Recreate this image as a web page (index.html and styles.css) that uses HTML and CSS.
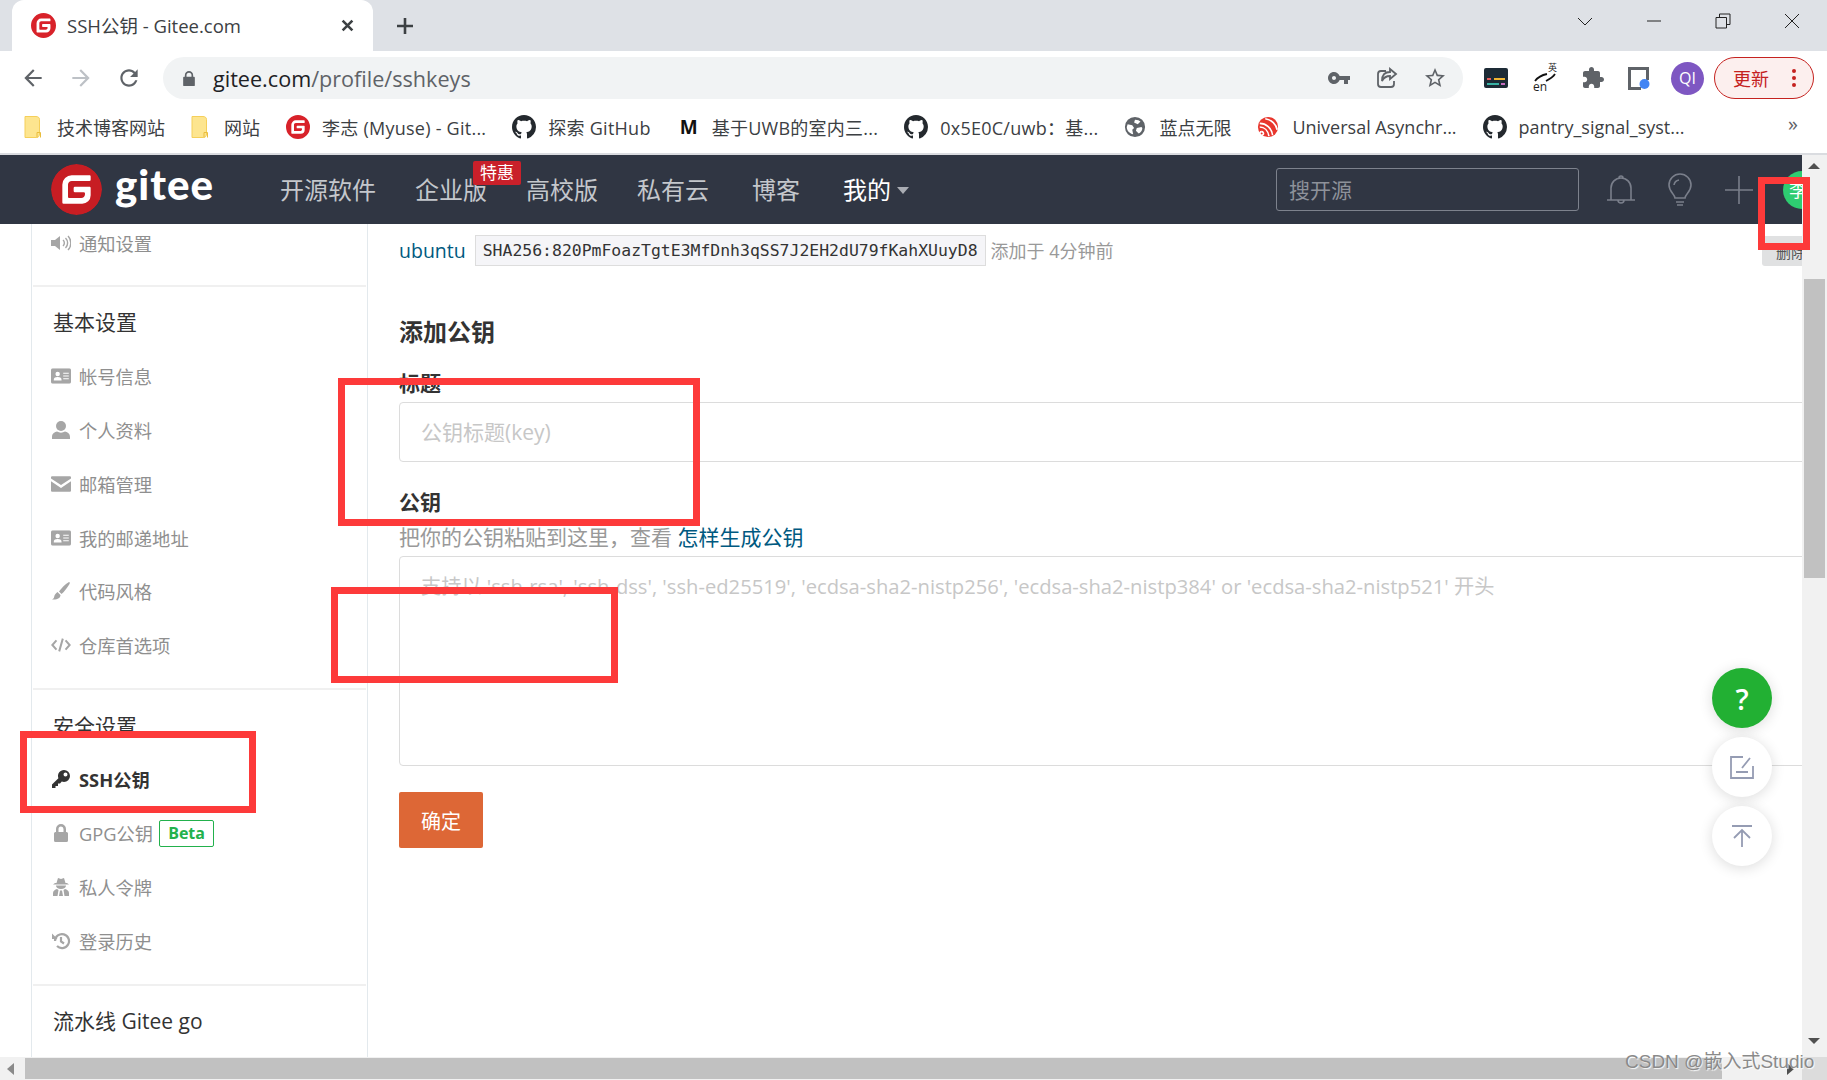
FILE: index.html
```html
<!DOCTYPE html>
<html lang="en">
<head>
  <meta charset="UTF-8">
  <title>SSH公钥 - Gitee.com</title>
  <link rel="stylesheet" href="styles.css">
</head>
<body>
  <svg class="sprites" width="0" height="0">
    <symbol id="i-gitee" viewBox="0 0 24 24"><path fill="currentColor" d="M11.984 0A12 12 0 0 0 0 12a12 12 0 0 0 12 12 12 12 0 0 0 12-12A12 12 0 0 0 12 0a12 12 0 0 0-.016 0zm6.09 5.333c.328 0 .593.266.592.593v1.482a.594.594 0 0 1-.593.592H9.777c-.982 0-1.778.796-1.778 1.778v5.63c0 .327.266.592.593.592h5.63c.982 0 1.778-.796 1.778-1.778v-.296a.593.593 0 0 0-.592-.593h-4.15a.592.592 0 0 1-.592-.592v-1.482a.593.593 0 0 1 .593-.592h6.815c.327 0 .593.265.593.592v3.408a4 4 0 0 1-4 4H5.926a.593.593 0 0 1-.593-.593V9.778a4.444 4.444 0 0 1 4.445-4.444h8.296Z"/></symbol>
    <symbol id="i-github" viewBox="0 0 16 16"><path fill="currentColor" d="M8 0C3.58 0 0 3.58 0 8c0 3.54 2.29 6.53 5.47 7.59.4.07.55-.17.55-.38 0-.19-.01-.82-.01-1.49-2.01.37-2.53-.49-2.69-.94-.09-.23-.48-.94-.82-1.13-.28-.15-.68-.52-.01-.53.63-.01 1.08.58 1.23.82.72 1.21 1.87.87 2.33.66.07-.52.28-.87.51-1.07-1.78-.2-3.64-.89-3.64-3.95 0-.87.31-1.59.82-2.15-.08-.2-.36-1.02.08-2.12 0 0 .67-.21 2.2.82.64-.18 1.32-.27 2-.27.68 0 1.36.09 2 .27 1.53-1.04 2.2-.82 2.2-.82.44 1.1.16 1.92.08 2.12.51.56.82 1.27.82 2.15 0 3.07-1.87 3.75-3.65 3.95.29.25.54.73.54 1.48 0 1.07-.01 1.93-.01 2.2 0 .21.15.46.55.38A8.013 8.013 0 0016 8c0-4.42-3.58-8-8-8z"/></symbol>
    <symbol id="i-folder" viewBox="0 0 18 24"><path fill="#fde58f" stroke="#f5cf5a" d="M1 1.5h11c2 0 3.5 1 3.5 3v14.5c0 2-1 3.500-3 3.500H1z"/><path fill="none" stroke="#e9bd3c" d="M13 22.500v-5h3.500v5"/></symbol>
    <symbol id="i-card" viewBox="0 0 18 14"><path fill="currentColor" fill-rule="evenodd" d="M1.500 0h15A1.500 1.500 0 0 1 18 1.500v11a1.500 1.500 0 0 1-1.500 1.500h-15A1.500 1.500 0 0 1 0 12.500v-11A1.500 1.500 0 0 1 1.500 0zM6 3.200a2 2 0 1 0 0 4 2 2 0 0 0 0-4zM2.500 11h7c.2-2-1-3-3.500-3s-3.700 1-3.500 3zM11 4v1h5V4zm0 2.500v1h5v-1zM11 9v1h5V9z"/></symbol>
  </svg>

  <div class="tab-strip">
    <div class="tab">
      <svg class="tab-icon"><use href="#i-gitee"/></svg>
      <span class="tab-title">SSH公钥 - Gitee.com</span>
      <svg class="tab-close" viewBox="0 0 12 12"><path d="M1.500 1.500l9 9m0-9l-9 9"/></svg>
    </div>
    <svg class="tab-new" viewBox="0 0 18 18"><path d="M9 1v16M1 9h16"/></svg>
    <div class="window-btns">
      <svg viewBox="0 0 16 16"><path d="M1 5l7 7 7-7"/></svg>
      <svg viewBox="0 0 16 16"><path d="M1 8h14"/></svg>
      <svg viewBox="0 0 16 16"><path d="M1 4.500h10.500V15H1zM4.500 4.500V1H15v10.500h-3.500"/></svg>
      <svg viewBox="0 0 16 16"><path d="M1 1l14 14M15 1L1 15"/></svg>
    </div>
  </div>

  <div class="toolbar">
    <svg class="tb-btn" viewBox="0 0 24 24"><path d="M20 11H7.830l5.590-5.590L12 4l-8 8 8 8 1.410-1.410L7.830 13H20v-2z"/></svg>
    <svg class="tb-btn tb-off" viewBox="0 0 24 24"><path d="M4 11h12.170l-5.590-5.590L12 4l8 8-8 8-1.410-1.410L16.170 13H4v-2z"/></svg>
    <svg class="tb-btn" viewBox="0 0 24 24"><path d="M17.650 6.350C16.200 4.900 14.210 4 12 4c-4.420 0-7.990 3.580-7.990 8s3.570 8 7.990 8c3.730 0 6.840-2.550 7.730-6h-2.080c-.82 2.330-3.040 4-5.650 4-3.310 0-6-2.690-6-6s2.690-6 6-6c1.660 0 3.140.69 4.220 1.780L13 11h7V4l-2.350 2.350z"/></svg>
    <div class="omnibox">
      <svg class="omni-lock" viewBox="0 0 14 18"><path d="M2 7V5a5 5 0 0 1 10 0v2h1a1 1 0 0 1 1 1v9a1 1 0 0 1-1 1H1a1 1 0 0 1-1-1V8a1 1 0 0 1 1-1zm2 0h6V5a3 3 0 0 0-6 0z"/></svg>
      <span class="omni-url">gitee.com<span class="omni-path">/profile/sshkeys</span></span>
      <svg class="omni-key" viewBox="0 0 24 24"><path d="M12.650 10C11.830 7.670 9.610 6 7 6c-3.310 0-6 2.690-6 6s2.690 6 6 6c2.610 0 4.830-1.670 5.650-4H17v4h4v-4h2v-4H12.650zM7 14c-1.100 0-2-.9-2-2s.9-2 2-2 2 .9 2 2-.9 2-2 2z"/></svg>
      <svg class="omni-share" viewBox="0 0 24 24"><path d="M11 5H6a3 3 0 0 0-3 3v10a3 3 0 0 0 3 3h10a3 3 0 0 0 3-3v-3M21 8l-6-5v3c-5 0-8 3-8 9 2-4 4-5 8-5v3z"/></svg>
      <svg class="omni-star" viewBox="0 0 24 24"><path d="M22 9.240l-7.190-.62L12 2 9.190 8.630 2 9.240l5.460 4.730L5.820 21 12 17.270 18.180 21l-1.630-7.030L22 9.240zM12 15.400l-3.760 2.270 1-4.280-3.320-2.880 4.380-.38L12 6.100l1.710 4.040 4.380.38-3.320 2.880 1 4.280L12 15.400z"/></svg>
    </div>
    <svg class="ext-term" viewBox="0 0 24 20"><rect width="24" height="20" rx="2" fill="#1d2b36"/><rect x="3" y="10" width="4" height="2" fill="#e85d5d"/><rect x="10" y="10" width="11" height="2" fill="#f2b632"/><rect x="3" y="15" width="12" height="2" fill="#39b3a5"/><rect x="17" y="15" width="4" height="2" fill="#c56cc0"/></svg>
    <div class="ext-trans">
      <span class="trans-zh">英</span>
      <svg viewBox="0 0 24 12"><path d="M2 10c3-4 7-6 12-7M22 3c-2 3-5 5-9 7" fill="none" stroke="#111" stroke-width="1.800"/></svg>
      <span class="trans-en">en</span>
    </div>
    <svg class="ext-puzzle" viewBox="0 0 24 24"><path d="M20.500 11H19V7c0-1.100-.9-2-2-2h-4V3.500C13 2.120 11.880 1 10.500 1S8 2.120 8 3.500V5H4c-1.100 0-1.990.9-1.990 2v3.800H3.500c1.490 0 2.700 1.210 2.700 2.700s-1.210 2.700-2.700 2.700H2V20c0 1.100.9 2 2 2h3.800v-1.500c0-1.490 1.210-2.700 2.700-2.700 1.490 0 2.700 1.210 2.700 2.700V22H17c1.100 0 2-.9 2-2v-4h1.500c1.380 0 2.500-1.120 2.500-2.500S21.880 11 20.500 11z"/></svg>
    <svg class="ext-box" viewBox="0 0 22 24"><path fill="#5f6368" d="M0 1h21v13h-3V4H3v17h10v3H0z"/><circle cx="16.500" cy="18" r="5" fill="#4285f4"/></svg>
    <div class="profile">QI</div>
    <div class="update-pill"><span>更新</span><i class="dots"></i></div>
  </div>

  <div class="bookmarks">
    <div class="bm"><svg class="bm-folder"><use href="#i-folder"/></svg>技术博客网站</div>
    <div class="bm"><svg class="bm-folder"><use href="#i-folder"/></svg>网站</div>
    <div class="bm bm-latin"><svg class="bm-icon bm-red"><use href="#i-gitee"/></svg>李志 (Myuse) - Git...</div>
    <div class="bm bm-latin"><svg class="bm-icon"><use href="#i-github"/></svg>探索 GitHub</div>
    <div class="bm bm-latin"><b class="bm-m">M</b>基于UWB的室内三...</div>
    <div class="bm bm-latin"><svg class="bm-icon"><use href="#i-github"/></svg>0x5E0C/uwb：基...</div>
    <div class="bm"><svg class="bm-icon bm-globe" viewBox="0 0 24 24"><path d="M12 1a11 11 0 1 0 0 22 11 11 0 0 0 0-22zM4 9l5 1 2 3-2 2 1 5c-4-1-7-4-7-8zm12 10l-3-3 1-3 5-1 1 1c0 3-2 5-4 6zM18 6l-3 3-4-2 1-3c3 0 5 1 6 2z"/></svg>蓝点无限</div>
    <div class="bm"><svg class="bm-icon bm-esp" viewBox="0 0 24 24"><circle cx="12" cy="12" r="11" fill="#e8362d"/><path d="M3 8c7 0 13 5 14 13M3 12c5 0 9 4 10 10M9 3c7 1 12 6 13 12M5 17a2 2 0 1 0 .1 0" fill="none" stroke="#fff" stroke-width="1.800"/></svg>Universal Asynchr...</div>
    <div class="bm"><svg class="bm-icon"><use href="#i-github"/></svg>pantry_signal_syst...</div>
    <span class="bm-more">»</span>
  </div>

  <div class="viewport">
    <div class="page">
      <header class="site-nav">
        <svg class="site-logo"><use href="#i-gitee"/></svg>
        <span class="site-name">gitee</span>
        <nav class="nav-links">
          <a>开源软件</a>
          <a class="nav-promo">企业版<span class="nav-badge">特惠</span></a>
          <a>高校版</a>
          <a>私有云</a>
          <a class="nav-wide">博客</a>
          <a class="nav-wide nav-me">我的<i class="caret"></i></a>
        </nav>
        <div class="nav-search">搜开源</div>
        <svg class="nav-icon" viewBox="0 0 34 34"><path d="M3 27h28M7 27V15a10 10 0 0 1 20 0v12M15 5a2 2 0 0 1 4 0M14 27a3 3 0 0 0 6 0"/></svg>
        <svg class="nav-icon" viewBox="0 0 34 34"><path d="M12 25c0-4-6-6-6-13a11 11 0 0 1 22 0c0 7-6 9-6 13zM13 29h8M14 32h6M11 12a6 6 0 0 1 5-5"/></svg>
        <svg class="nav-icon" viewBox="0 0 34 34"><path d="M17 3v28M3 17h28"/></svg>
        <div class="nav-avatar">李</div>
      </header>

      <div class="page-body">
        <aside class="side">
          <ul class="side-list side-first">
            <li class="side-item"><svg viewBox="0 0 20 16"><path d="M0 5h4l5-4v14l-5-4H0z"/><path class="arc" d="M12 5a4 4 0 0 1 0 6M14.500 3a7 7 0 0 1 0 10M17 1a10 10 0 0 1 0 14"/></svg>通知设置</li>
          </ul>
          <ul class="side-list">
            <li class="side-title">基本设置</li>
            <li class="side-item"><svg viewBox="0 0 18 14"><use href="#i-card"/></svg>帐号信息</li>
            <li class="side-item"><svg viewBox="0 0 18 18"><circle cx="9" cy="5" r="5"/><path d="M0 18v-2c0-4 3-5 5-5.500 2.500 1.500 5.500 1.500 8 0 2 .5 5 1.500 5 5.500v2z"/></svg>个人资料</li>
            <li class="side-item"><svg viewBox="0 0 18 14"><path d="M1 0h16a1 1 0 0 1 1 1v1L9 8 0 2V1a1 1 0 0 1 1-1zM0 4.500l9 6 9-6V13a1 1 0 0 1-1 1H1a1 1 0 0 1-1-1z"/></svg>邮箱管理</li>
            <li class="side-item"><svg viewBox="0 0 18 14"><use href="#i-card"/></svg>我的邮递地址</li>
            <li class="side-item"><svg viewBox="0 0 18 18"><path d="M17 0c1 0 1 1 .5 2C15 6 12 10 9.500 12L7 9.500C9 7 13 2 17 0zM6 10.500L8.500 13c0 3-3 5-8.500 4.500 2-1 2-2 2.500-4 .5-1.500 2-3 3.500-3.500z"/></svg>代码风格</li>
            <li class="side-item"><svg viewBox="0 0 22 16"><path class="arc arc-thick" d="M6 3L1.500 8 6 13M16 3l4.500 5L16 13M13 1L9 15"/></svg>仓库首选项</li>
          </ul>
          <ul class="side-list">
            <li class="side-title">安全设置</li>
            <li class="side-item side-active"><svg viewBox="0 0 18 18"><path fill-rule="evenodd" d="M12 0a6 6 0 0 1 0 12c-.8 0-1.500-.1-2.200-.4L8 13.500H6V16H3.500v2H0v-3.500l6.400-6.300A6 6 0 0 1 12 0zm1.500 2.500a2 2 0 1 0 0 4 2 2 0 0 0 0-4z"/></svg>SSH公钥</li>
            <li class="side-item"><svg viewBox="0 0 18 18"><path fill-rule="evenodd" d="M4 8V5a5 5 0 0 1 10 0v3h.5A1.500 1.500 0 0 1 16 9.500v7a1.500 1.500 0 0 1-1.500 1.500h-11A1.500 1.500 0 0 1 2 16.500v-7A1.500 1.500 0 0 1 3.500 8zm2.500 0h5V5a2.500 2.500 0 0 0-5 0z"/></svg>GPG公钥<span class="beta">Beta</span></li>
            <li class="side-item"><svg viewBox="0 0 18 18"><path fill-rule="evenodd" d="M6 0l3 1 3-1 1.500 5H15l2 1.500H1L3 5h1.500zM4 7.500h10c0 2-2 3.500-5 3.500S4 9.500 4 7.500zM1 18v-3c0-2 2-3.500 4-4l1.500 1L5.500 18zM17 18v-3c0-2-2-3.500-4-4l-1.500 1 1 6zM7 18l1-5.500h2l1 5.500z"/></svg>私人令牌</li>
            <li class="side-item"><svg viewBox="0 0 18 18"><path class="arc arc-thick" d="M3 9a7 7 0 1 1 2 5M9 5v4.500l3 2"/><path d="M0 1.500l5.500 5.500H0z"/></svg>登录历史</li>
          </ul>
          <ul class="side-list side-last">
            <li class="side-title">流水线 Gitee go</li>
          </ul>
        </aside>

        <main class="main">
          <div class="key-row">
            <a class="key-name">ubuntu</a>
            <code class="key-hash">SHA256:820PmFoazTgtE3MfDnh3qSS7J2EH2dU79fKahXUuyD8</code>
            <span class="key-time">添加于 4分钟前</span>
            <span class="key-del">删除</span>
          </div>
          <h3 class="form-head">添加公钥</h3>
          <label class="form-label">标题</label>
          <input class="form-input" type="text" placeholder="公钥标题(key)">
          <label class="form-label form-label-2">公钥</label>
          <p class="form-help">把你的公钥粘贴到这里，查看 <a>怎样生成公钥</a></p>
          <textarea class="form-area" placeholder="支持以 'ssh-rsa', 'ssh-dss', 'ssh-ed25519', 'ecdsa-sha2-nistp256', 'ecdsa-sha2-nistp384' or 'ecdsa-sha2-nistp521' 开头"></textarea>
          <button class="btn-ok">确定</button>
        </main>
      </div>

      <div class="float-btns">
        <div class="float-btn float-help">?</div>
        <div class="float-btn"><svg viewBox="0 0 24 24"><path d="M13 2H1v21h22V11M6 17h12M12 13l8-10"/></svg></div>
        <div class="float-btn"><svg viewBox="0 0 24 24"><path d="M2 2h20M12 23V7M4 14l8-8 8 8"/></svg></div>
      </div>
    </div>

    <div class="vscroll">
      <i class="arrow-up"></i>
      <div class="vthumb"></div>
      <i class="arrow-down"></i>
    </div>
  </div>

  <div class="hscroll">
    <i class="arrow-left"></i>
    <div class="hthumb"></div>
    <i class="arrow-right"></i>
    <div class="corner"></div>
  </div>

  <!-- marks drawn on top of the screenshot -->
  <div class="mark mark-side"></div>
  <div class="mark mark-title"></div>
  <div class="mark mark-area"></div>
  <div class="mark mark-avatar"></div>
  <div class="watermark">CSDN @嵌入式Studio</div>
</body>
</html>
```

FILE: styles.css
```css
* {
  box-sizing: border-box;
}

html, body {
  margin: 0;
  padding: 0;
}

body {
  position: relative;
  width: 1827px;
  height: 1080px;
  overflow: hidden;
  background: #fff;
  font-family: "Open Sans", "Noto Sans CJK SC", sans-serif;
  color: #333;
}

.sprites {
  position: absolute;
}

ul {
  list-style: none;
  margin: 0;
  padding: 0;
}

/* browser frame */
.tab-strip {
  display: flex;
  align-items: center;
  height: 51px;
  padding-left: 12px;
  background: #dee1e6;
}

.tab {
  display: flex;
  align-items: center;
  width: 361px;
  height: 51px;
  padding: 0 19px;
  background: #fff;
  border-radius: 12px 12px 0 0;
}

.tab-icon {
  width: 25px;
  height: 25px;
  color: #d8222a;
}

.tab-title {
  flex: 1;
  margin: -2px 0 0 11px;
  font-size: 18.5px;
  color: #3c4043;
}

.tab-close {
  width: 13px;
  height: 13px;
  fill: none;
  stroke: #3c4043;
  stroke-width: 2.4;
}

.tab-new {
  width: 18px;
  height: 18px;
  margin-left: 23px;
  fill: none;
  stroke: #3c4043;
  stroke-width: 2.6;
}

.window-btns {
  display: flex;
  align-self: flex-start;
  gap: 53px;
  margin-left: auto;
  padding: 13px 27px 0 0;
}

.window-btns svg {
  width: 16px;
  height: 16px;
  fill: none;
  stroke: #222;
  stroke-width: 1;
}

.toolbar {
  display: flex;
  align-items: center;
  height: 51px;
  padding: 3px 0 0 20px;
}

.tb-btn {
  width: 26px;
  height: 26px;
  margin-right: 22px;
  fill: #5f6368;
}

.tb-off {
  fill: #bdc1c6;
}

.omnibox {
  display: flex;
  align-items: center;
  width: 1300px;
  height: 42px;
  margin-left: -1px;
  padding: 0 16px 0 20px;
  border-radius: 21px;
  background: #f1f3f4;
}

.omni-lock {
  width: 12px;
  height: 15px;
  fill: #5f6368;
}

.omni-url {
  flex: 1;
  margin-left: 18px;
  font-size: 21.6px;
  color: #202124;
}

.omni-path {
  color: #5f6368;
}

.omni-key, .omni-share, .omni-star {
  width: 24px;
  height: 24px;
  fill: #5f6368;
}

.omni-share {
  margin-left: 24px;
  fill: none;
  stroke: #5f6368;
  stroke-width: 1.8;
}

.omni-star {
  margin-left: 24px;
}

.ext-term {
  width: 24px;
  height: 20px;
  margin-left: 21px;
}

.ext-trans {
  position: relative;
  width: 24px;
  height: 28px;
  margin-left: 25px;
  color: #222;
}

.ext-trans svg {
  position: absolute;
  left: 0;
  top: 7px;
  width: 24px;
  height: 12px;
}

.trans-zh {
  position: absolute;
  right: 0;
  top: -2px;
  font-size: 9px;
  line-height: 12px;
}

.trans-en {
  position: absolute;
  left: 0;
  bottom: -1px;
  font-size: 12px;
  line-height: 12px;
}

.ext-puzzle {
  width: 24px;
  height: 24px;
  margin-left: 24px;
  fill: #5f6368;
}

.ext-box {
  width: 22px;
  height: 24px;
  margin-left: 23px;
}

.profile {
  width: 33px;
  height: 33px;
  margin-left: 21px;
  border-radius: 50%;
  background: #7e57c2;
  color: #fff;
  font-size: 16px;
  line-height: 33px;
  text-align: center;
}

.update-pill {
  display: flex;
  align-items: center;
  width: 100px;
  height: 42px;
  margin-left: 10px;
  padding-left: 18px;
  border: 1.5px solid #c5221f;
  border-radius: 21px;
  background: #fcefee;
  color: #c5221f;
  font-size: 18px;
}

.dots {
  width: 4px;
  height: 4px;
  margin-left: 23px;
  border-radius: 50%;
  background: #c5221f;
  box-shadow: 0 -7px 0 #c5221f, 0 7px 0 #c5221f;
}

.bookmarks {
  display: flex;
  align-items: center;
  gap: 26px;
  height: 53px;
  padding: 0 0 2px 24px;
  border-bottom: 2px solid #dadce0;
}

.bm {
  display: flex;
  align-items: center;
  gap: 12px;
  font-size: 18px;
  color: #3c4043;
  white-space: nowrap;
}

.bm-latin {
  letter-spacing: 0.25px;
}

.bm-folder {
  width: 18px;
  height: 24px;
  margin-right: 3px;
}

.bm-icon {
  width: 24px;
  height: 24px;
  color: #24292e;
}

.bm-red {
  color: #d8222a;
}

.bm-globe {
  width: 22px;
  fill: #5f6368;
  margin-right: 1px;
}

.bm-esp {
  width: 22px;
  height: 24px;
  margin-right: 1px;
}

.bm-m {
  width: 16px;
  margin: 0 4px 0 3px;
  color: #111;
  font-size: 19px;
}

.bm-more {
  margin-left: auto;
  padding: 0 29px 6px 0;
  font-size: 20px;
  color: #5f6368;
}

/* page in the viewport */
.viewport {
  display: flex;
  height: 902px;
}

.page {
  position: relative;
  flex: 1;
  min-width: 0;
  overflow: hidden;
}

.site-nav {
  display: flex;
  align-items: center;
  height: 69px;
  padding-left: 51px;
  background: #303643;
}

.site-logo {
  flex: none;
  width: 51px;
  height: 51px;
  color: #c71d23;
  background: radial-gradient(#fff 60%, transparent 62%);
  border-radius: 50%;
}

.site-name {
  width: 100px;
  margin: -11px 0 0 13px;
  font: 900 42px "Lato", sans-serif;
  color: #fff;
  letter-spacing: 1px;
}

.nav-links {
  display: flex;
  gap: 39px;
  margin: -2px 0 0 65px;
  font-size: 24px;
  color: #c4c7cc;
}

.nav-wide {
  margin-left: 4px;
}

.nav-promo {
  position: relative;
}

.nav-badge {
  position: absolute;
  top: -10px;
  left: 58px;
  width: 48px;
  height: 24px;
  border-radius: 2px;
  background: #c9202a;
  color: #fff;
  font-size: 17px;
  line-height: 23px;
  text-align: center;
}

.nav-me {
  display: flex;
  align-items: center;
  color: #fff;
}

.caret {
  width: 0;
  height: 0;
  margin: 3px 0 0 6px;
  border: 6.5px solid transparent;
  border-top: 7px solid #a9acb3;
  border-bottom: 0;
}

.nav-search {
  flex: none;
  width: 303px;
  height: 43px;
  margin-left: auto;
  padding-left: 12px;
  border: 1px solid #7d828d;
  border-radius: 3px;
  color: #8d919a;
  font-size: 21px;
  line-height: 43px;
}

.nav-icon {
  flex: none;
  width: 34px;
  height: 34px;
  margin-left: 25px;
  fill: none;
  stroke: #7a7f8b;
  stroke-width: 1.6;
}

.nav-avatar {
  flex: none;
  width: 38px;
  height: 38px;
  margin: 0 -19px 0 27px;
  padding-right: 8px;
  border-radius: 50%;
  background: #2ecc71;
  color: #fff;
  font-size: 18px;
  line-height: 38px;
  text-align: center;
}

.page-body {
  display: flex;
  height: 833px;
}

.side {
  flex: none;
  width: 337px;
  margin-left: 31px;
  padding: 0 1px;
  border-left: 1px solid #e3e9ed;
  border-right: 1px solid #e3e9ed;
  overflow: hidden;
}

.side-list {
  padding: 8.5px 0 16px;
  border-bottom: 2px solid #f0f0f0;
}

.side-first {
  margin-top: -8px;
  padding: 0 0 15px;
}

.side-last {
  border-bottom: 0;
}

.side-item {
  display: flex;
  align-items: center;
  height: 53.8px;
  padding-left: 18px;
  color: #8f8f8f;
  font-size: 18.3px;
}

.side-item svg {
  flex: none;
  width: 20px;
  height: 18px;
  margin-right: 8px;
  fill: #a6a6a6;
  color: #a6a6a6;
}

.side-item .arc {
  fill: none;
  stroke: #a6a6a6;
  stroke-width: 1.4;
}

.side-item .arc-thick {
  stroke-width: 2.2;
}

.side-active {
  color: #333;
  font-weight: 700;
}

.side-active svg {
  fill: #333;
}

.side-title {
  height: 54px;
  padding-left: 20px;
  color: #333;
  font-size: 21px;
  line-height: 54px;
}

.beta {
  margin-left: 6px;
  padding: 0 8px;
  border: 1px solid #22b14c;
  border-radius: 2px;
  color: #22b14c;
  font-size: 16px;
  font-weight: 700;
  line-height: 25px;
}

.main {
  flex: 1;
  min-width: 0;
  padding-left: 31px;
  overflow: hidden;
}

.key-row {
  display: flex;
  align-items: center;
  height: 31px;
  margin-top: 11px;
  white-space: nowrap;
}

.key-name {
  margin-top: -1px;
  color: #005980;
  font-size: 19.5px;
}

.key-hash {
  height: 31px;
  margin-left: 9px;
  padding: 0 7px;
  border: 1px solid #ddd;
  background: #f5f5f8;
  color: #333;
  font-family: "DejaVu Sans Mono", monospace;
  font-size: 16.45px;
  line-height: 29px;
}

.key-time {
  margin: -2px 0 0 5px;
  color: #999;
  font-size: 18px;
}

.key-del {
  flex: none;
  width: 40px;
  height: 30px;
  margin-left: auto;
  padding-left: 14px;
  background: #e0e1e2;
  color: #555;
  font-size: 15px;
  line-height: 32px;
  border-radius: 3px 0 0 3px;
  overflow: hidden;
}

.form-head {
  margin: 49px 0 0;
  font-size: 24px;
  line-height: 34px;
  color: #333;
}

.form-label {
  display: block;
  margin-top: 20px;
  font-size: 21px;
  font-weight: 700;
  line-height: 28px;
}

.form-input {
  display: block;
  width: 1500px;
  height: 60px;
  margin-top: 5px;
  padding: 0 21px;
  border: 1px solid #dcdcdc;
  border-radius: 4px;
  outline: 0;
  font: 21px "Open Sans", "Noto Sans CJK SC", sans-serif;
}

.form-label-2 {
  margin-top: 26px;
}

.form-help {
  margin: 7px 0 0;
  color: #999;
  font-size: 21px;
  line-height: 28px;
}

.form-help a {
  color: #005980;
}

.form-area {
  display: block;
  width: 1500px;
  height: 210px;
  margin-top: 5px;
  padding: 14px 21px;
  border: 1px solid #dcdcdc;
  border-radius: 4px;
  outline: 0;
  resize: none;
  font: 20.2px/30px "Open Sans", "Noto Sans CJK SC", sans-serif;
}

.form-input::placeholder, .form-area::placeholder {
  color: #c7c7c7;
  opacity: 1;
}

.btn-ok {
  display: block;
  width: 84px;
  height: 56px;
  margin-top: 26px;
  border: 0;
  border-radius: 2px;
  background: #dd6736;
  color: #fff;
  font: 20px "Noto Sans CJK SC", sans-serif;
}

.float-btns {
  position: absolute;
  top: 513px;
  right: 30px;
  display: flex;
  flex-direction: column;
  gap: 9px;
}

.float-btn {
  display: flex;
  align-items: center;
  justify-content: center;
  width: 60px;
  height: 60px;
  border-radius: 50%;
  background: #fff;
  box-shadow: 0 2px 14px rgba(0, 0, 0, 0.14);
}

.float-btn svg {
  width: 24px;
  height: 24px;
  fill: none;
  stroke: #959cb3;
  stroke-width: 1.8;
}

.float-help {
  background: #22b033;
  color: #fff;
  font-size: 29px;
  font-weight: 600;
}

/* scrollbars */
.vscroll {
  position: relative;
  flex: none;
  width: 25px;
  background: #f1f1f1;
}

.vthumb {
  width: 21px;
  height: 299px;
  margin: 124px 0 0 2px;
  background: #c1c1c1;
}

.arrow-up, .arrow-down {
  position: absolute;
  left: 6px;
  width: 0;
  height: 0;
  border: 6px solid transparent;
}

.arrow-up {
  top: 8px;
  border-bottom: 6px solid #505050;
  border-top: 0;
}

.arrow-down {
  bottom: 13px;
  border-top: 6px solid #505050;
  border-bottom: 0;
}

.hscroll {
  position: relative;
  display: flex;
  height: 23px;
  background: #f1f1f1;
}

.hthumb {
  width: 1697px;
  height: 21px;
  margin: 1px 0 0 25px;
  background: #c1c1c1;
}

.arrow-left, .arrow-right {
  position: absolute;
  top: 6px;
  width: 0;
  height: 0;
  border: 6px solid transparent;
}

.arrow-left {
  left: 7px;
  border-right: 7px solid #8a8a8a;
  border-left: 0;
}

.arrow-right {
  left: 1787px;
  border-left: 7px solid #505050;
  border-right: 0;
}

.corner {
  width: 25px;
  margin-left: auto;
  background: #dcdcdc;
}

/* red annotation boxes */
.mark {
  position: absolute;
  border: 7px solid #fd3a3a;
}

.mark-side {
  left: 20px;
  top: 731px;
  width: 236px;
  height: 82px;
}

.mark-title {
  left: 338px;
  top: 378px;
  width: 362px;
  height: 148px;
}

.mark-area {
  left: 331px;
  top: 587px;
  width: 287px;
  height: 96px;
}

.mark-avatar {
  left: 1758px;
  top: 177px;
  width: 52px;
  height: 73px;
}

.watermark {
  position: absolute;
  left: 1625px;
  top: 1046px;
  color: #8a8a8a;
  font-family: "Liberation Sans", "Noto Sans CJK SC", sans-serif;
  font-size: 19px;
  white-space: nowrap;
  text-shadow: 1px 1px 1px rgba(255, 255, 255, 0.9);
}
```
